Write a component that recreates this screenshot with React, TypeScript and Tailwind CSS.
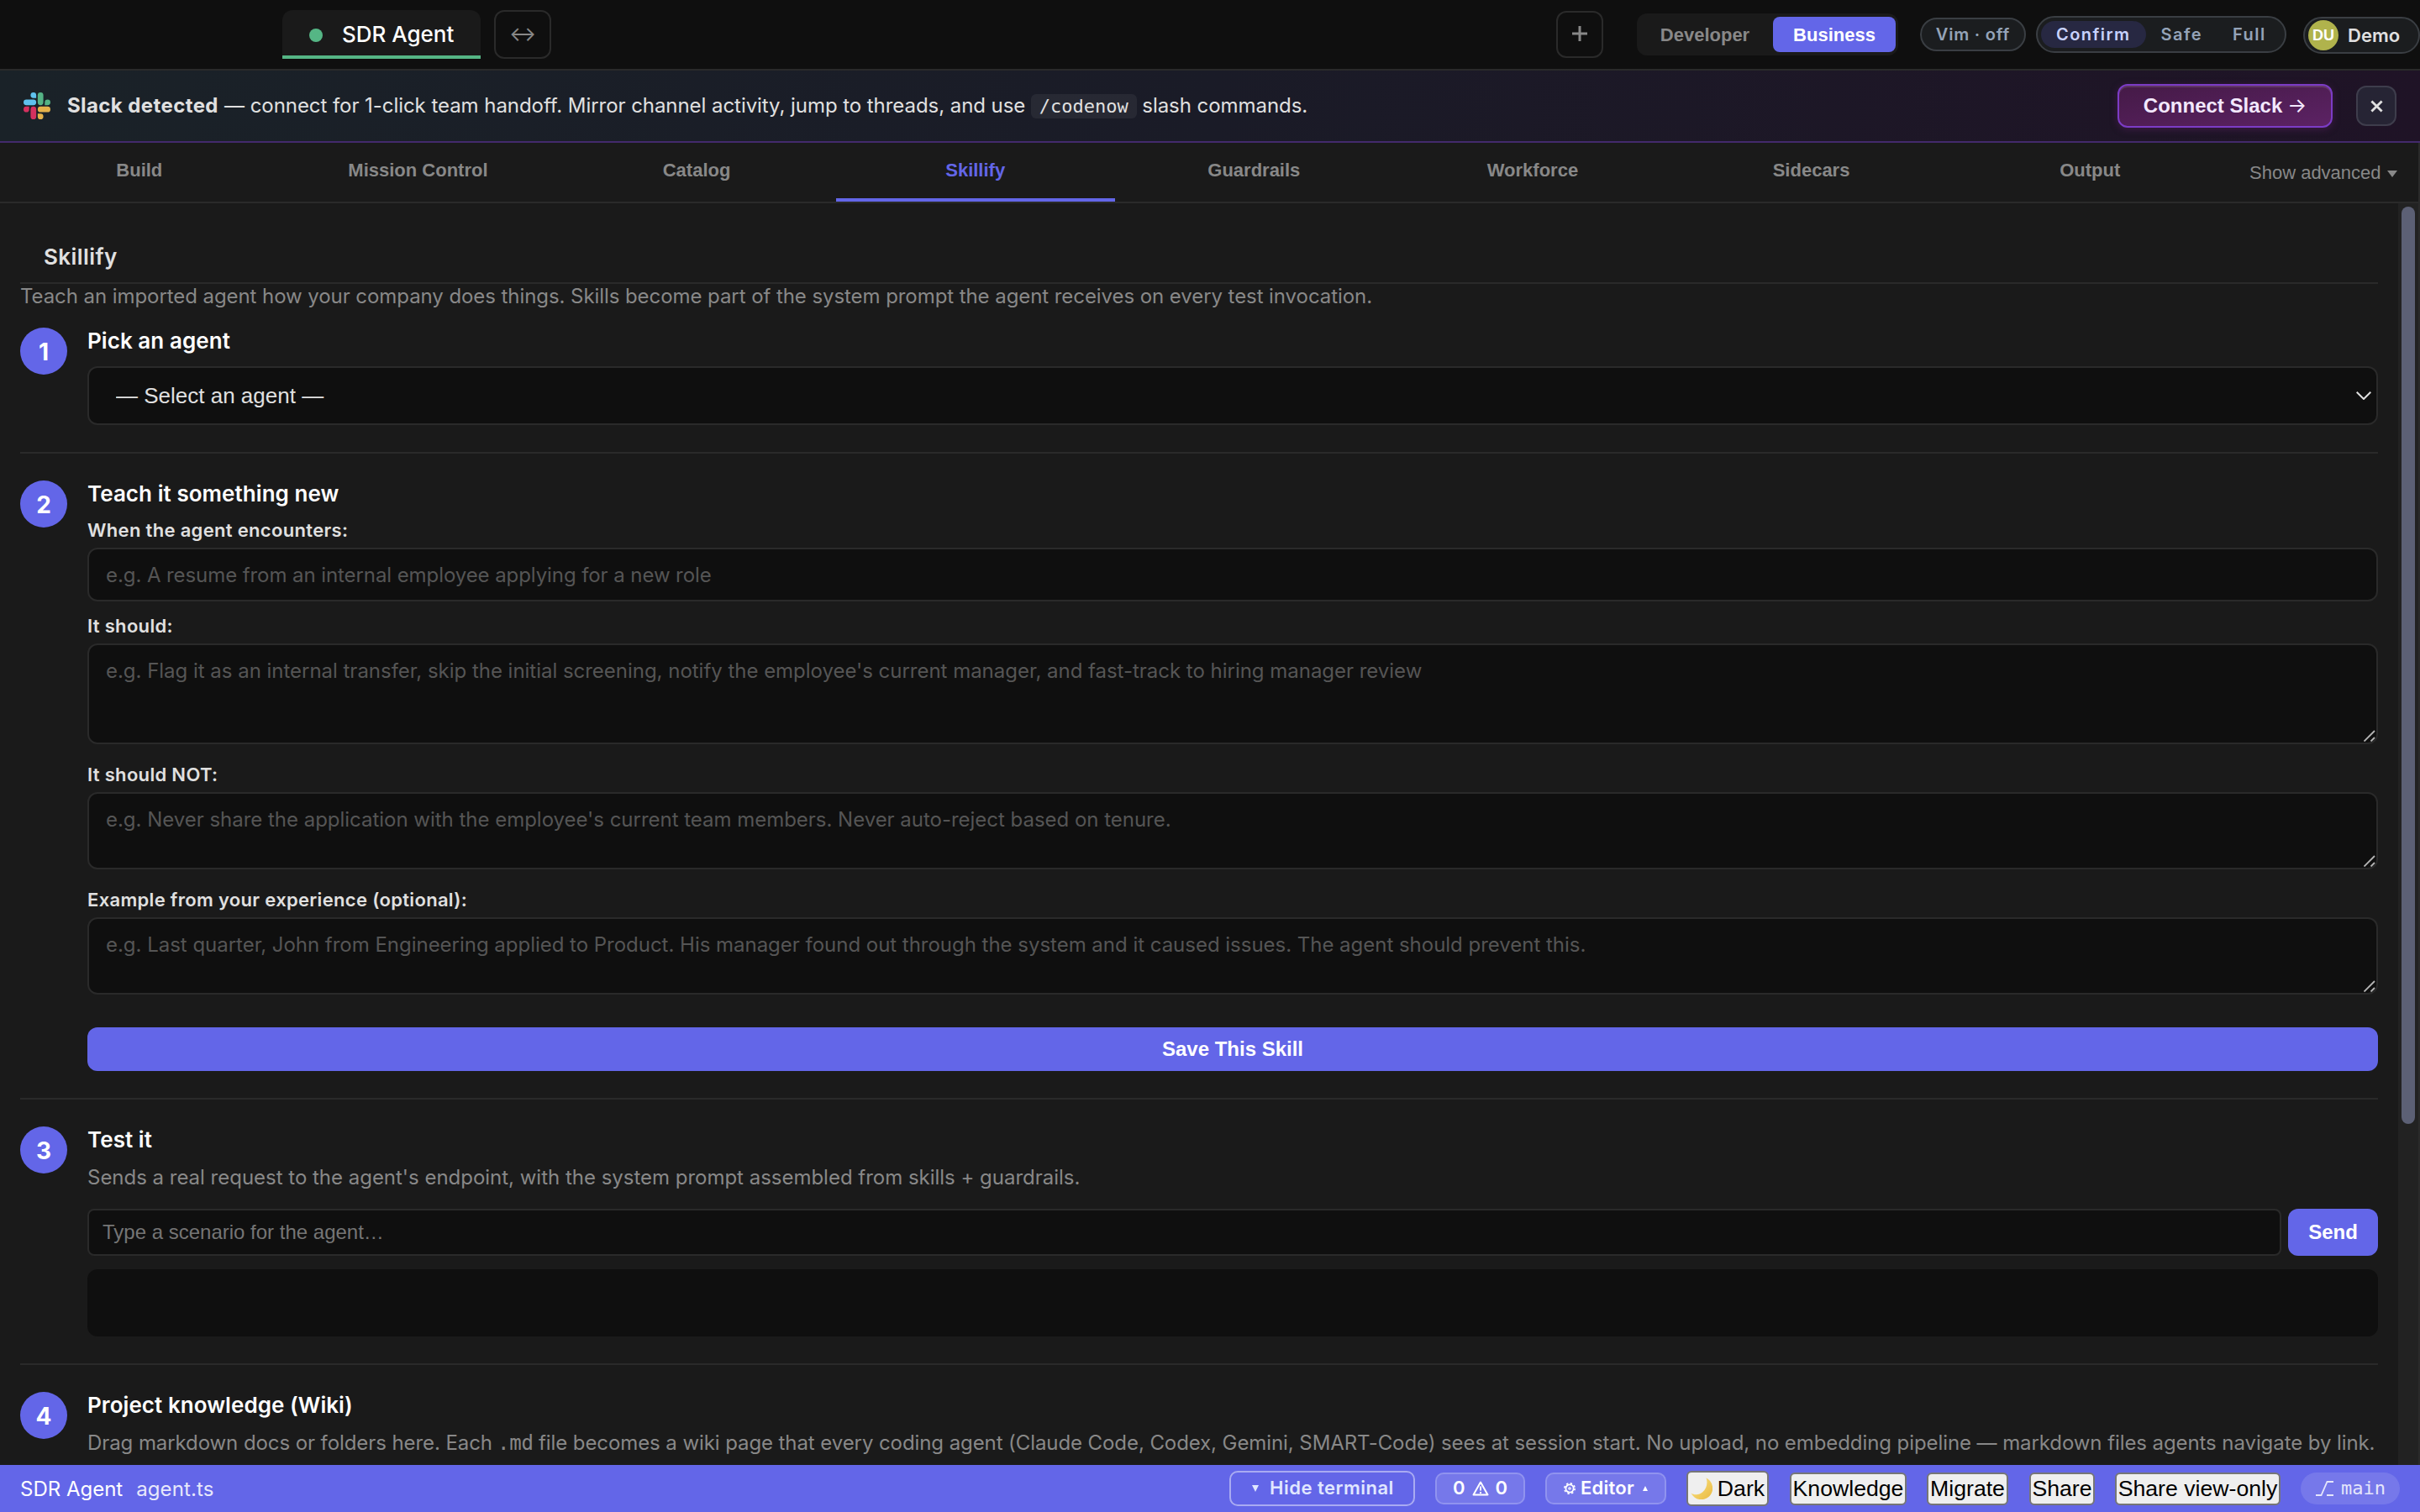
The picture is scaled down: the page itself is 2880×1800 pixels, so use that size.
import type { ReactNode } from 'react'
import clsx from 'clsx'

const tabs = ['Build', 'Mission Control', 'Catalog', 'Skillify', 'Guardrails', 'Workforce', 'Sidecars', 'Output']

const modes = ['Confirm', 'Safe', 'Full']

function SlackLogo() {
  return (
    <svg viewBox="0 0 24 24" className="size-8 shrink-0">
      <path fill="#d4315f" d="M5.042 15.165a2.528 2.528 0 0 1-2.52 2.523A2.528 2.528 0 0 1 0 15.165a2.527 2.527 0 0 1 2.522-2.52h2.52v2.52zM6.313 15.165a2.527 2.527 0 0 1 2.521-2.52 2.527 2.527 0 0 1 2.521 2.52v6.313A2.528 2.528 0 0 1 8.834 24a2.528 2.528 0 0 1-2.521-2.522v-6.313z" />
      <path fill="#5fc2ee" d="M8.834 5.042a2.528 2.528 0 0 1-2.521-2.52A2.528 2.528 0 0 1 8.834 0a2.528 2.528 0 0 1 2.521 2.522v2.52H8.834zM8.834 6.313a2.528 2.528 0 0 1 2.521 2.521 2.528 2.528 0 0 1-2.521 2.521H2.522A2.528 2.528 0 0 1 0 8.834a2.528 2.528 0 0 1 2.522-2.521h6.312z" />
      <path fill="#55b385" d="M18.956 8.834a2.528 2.528 0 0 1 2.522-2.521A2.528 2.528 0 0 1 24 8.834a2.528 2.528 0 0 1-2.522 2.521h-2.522V8.834zM17.688 8.834a2.528 2.528 0 0 1-2.523 2.521 2.527 2.527 0 0 1-2.52-2.521V2.522A2.527 2.527 0 0 1 15.165 0a2.528 2.528 0 0 1 2.523 2.522v6.312z" />
      <path fill="#e5b24a" d="M15.165 18.956a2.528 2.528 0 0 1 2.523 2.522A2.528 2.528 0 0 1 15.165 24a2.527 2.527 0 0 1-2.52-2.522v-2.522h2.52zM15.165 17.688a2.527 2.527 0 0 1-2.52-2.523 2.526 2.526 0 0 1 2.52-2.52h6.313A2.527 2.527 0 0 1 24 15.165a2.528 2.528 0 0 1-2.522 2.523h-6.313z" />
    </svg>
  )
}

function TopBar() {
  return (
    <header className="flex h-[84px] shrink-0 items-start border-b-2 border-[#2a2a2a] bg-[#0f0f0f] pl-[336px]">
      <button className="mt-3 flex h-[58px] w-[236px] items-center rounded-t-xl border-b-4 border-[#55b685] bg-[#1a1a1a] pl-8 text-[26px] font-medium text-white">
        <span className="mt-1.5 size-4 rounded-full bg-[#55b685]" />
        <span className="ml-[23px] mt-0.5 tracking-[-0.02px]">SDR Agent</span>
      </button>
      <button className="mt-3 ml-4 flex h-[58px] w-[68px] items-center justify-center rounded-xl border-2 border-[#2a2a2a] text-2xl text-[#888]">
        ↔
      </button>

      <button className="mt-[13px] ml-auto flex size-14 items-center justify-center rounded-xl border-2 border-[#2a2a2a] text-[#888]">
        <svg viewBox="0 0 18 18" className="mb-0.5 size-[18px]" stroke="currentColor" strokeWidth="3">
          <path d="M9 0v18M0 9h18" />
        </svg>
      </button>

      <div className="mt-4 ml-10 flex h-[50px] w-[311px] items-center gap-1 rounded-xl bg-[#1a1a1a] py-1 pr-[3px] pl-1 font-[Liberation_Sans,sans-serif] text-[22px] font-bold">
        <button className="h-[42px] w-[154px] text-[#888]">Developer</button>
        <button className="h-[42px] w-[146px] rounded-lg bg-[#6366e8] text-white">Business</button>
      </div>

      <button className="mt-[21px] ml-[26px] h-10 w-[126px] rounded-full border-2 border-[#3a3e43] bg-[#1b1d1f] text-xl leading-none font-semibold tracking-[0.8px] text-[#94a3b8]">
        Vim · off
      </button>

      <div className="mt-[19px] ml-3 flex h-11 w-[298px] items-center rounded-full border-2 border-[#3a3e43] bg-[#1b1d1f] px-1 text-xl font-semibold tracking-[1.45px] text-[#94a3b8]">
        {modes.map((mode, i) => (
          <button key={mode} className={clsx('h-8 rounded-full px-[18px] leading-8', i === 0 && 'bg-[#272842] text-[#c7d2fe]')}>
            {mode}
          </button>
        ))}
      </div>

      <button className="mt-5 ml-5 flex h-11 w-[139px] items-center rounded-full border-2 border-[#3a3e43] bg-[#1b1d1f] pl-1 text-[22px] font-semibold text-[#e0e0e0]">
        <span className="flex size-9 items-center justify-center rounded-full bg-[#b0b34c] font-[Liberation_Sans,sans-serif] text-lg font-bold text-white">DU</span>
        <span className="ml-[11px]">Demo</span>
      </button>
    </header>
  )
}

function SlackBanner() {
  return (
    <div className="flex h-[86px] shrink-0 items-center border-b-2 border-[#432a6c] bg-linear-to-r from-[#1a2228] via-[#1a1b27] to-[#1f1326] pr-7 pl-7 text-2xl whitespace-nowrap text-[#e0e0e0]">
      <SlackLogo />
      <strong className="ml-5 w-[187px] font-bold tracking-[0.4px]">Slack detected</strong>
      <span className="tracking-[-0.055px]">— connect for 1-click team handoff. Mirror channel activity, jump to threads, and use</span>
      <code className="mx-[6.5px] rounded-md bg-white/6 px-2.5 font-['DejaVu_Sans_Mono',monospace] text-[22px] leading-[29px]">/codenow</code>
      <span className="tracking-[-0.05px]">slash commands.</span>
      <button className="ml-auto flex h-[52px] w-64 items-center justify-center gap-1.5 rounded-xl border-2 border-[#7c3cc6] bg-linear-to-br from-[#451a47] to-[#5c2264] font-[Liberation_Sans,sans-serif] font-bold text-[#f3e8ff] shadow-[0_2px_8px_rgba(92,34,100,0.5),inset_0_2px_0_rgba(255,255,255,0.12)]">
        <span>Connect Slack</span>
        <span className="font-[Inter,sans-serif] font-normal">→</span>
      </button>
      <button className="ml-7 flex h-12 w-12 items-center justify-center rounded-xl border-2 border-[#3e3d4c] bg-[#262434]">
        <svg viewBox="0 0 16 16" className="size-[15px]" stroke="currentColor" strokeWidth="3">
          <path d="M1.5 1.5l13 13M14.5 1.5l-13 13" />
        </svg>
      </button>
    </div>
  )
}

function TabNav() {
  return (
    <nav className="flex h-[72px] shrink-0 border-b-2 border-[#2a2a2a] font-[Liberation_Sans,sans-serif] text-[22px]">
      {tabs.map((tab) => (
        <button
          key={tab}
          className={clsx('flex-1 border-b-4 pb-px font-bold', tab === 'Skillify' ? 'border-[#6366e8] text-[#6366e8]' : 'border-transparent text-[#888]')}
        >
          {tab}
        </button>
      ))}
      <button className="flex w-[225px] items-center gap-[7px] px-6 text-[#888]">
        <span className="pt-px whitespace-nowrap">Show advanced</span>
        <svg viewBox="0 0 12 8" className="mt-1 h-2 w-3" fill="currentColor">
          <path d="M0 0h12L6 8z" />
        </svg>
      </button>
    </nav>
  )
}

function Step({ n, title, last, children }: { n: number; title: string; last?: boolean; children: ReactNode }) {
  return (
    <section className={clsx('flex gap-6 pb-8', !last && 'mb-8 border-b-2 border-[#2a2a2a]')}>
      <div className="flex size-14 shrink-0 items-center justify-center rounded-full bg-[#6366e8] pt-0.5 text-[28px] font-bold text-white">{n}</div>
      <div className="flex min-w-0 flex-1 flex-col">
        <h3 className="h-8 text-[26px] leading-8 font-semibold tracking-[0.06px] text-white">{title}</h3>
        {children}
      </div>
    </section>
  )
}

function Label({ children, first }: { children: ReactNode; first?: boolean }) {
  return (
    <label className={clsx('mb-2 text-[22px] leading-[26px] font-semibold tracking-[0.32px] text-[#e0e0e0]', first && 'mt-3.5')}>
      {children}
    </label>
  )
}

function TextArea({ placeholder, className }: { placeholder: string; className: string }) {
  return (
    <div className={clsx('relative', className)}>
      <textarea
        placeholder={placeholder}
        className="block h-full w-full resize-none rounded-xl border-2 border-[#2a2a2a] bg-[#0f0f0f] px-5 pt-[17px] text-2xl leading-7 tracking-[-0.022px] placeholder:text-[#555]"
      />
      <svg viewBox="0 0 14 14" className="absolute right-[3px] bottom-[3px] size-3.5" stroke="#b5b5b5" strokeWidth="1.8">
        <path d="M0.5 13.5l12.5-12.5M8.5 13.5l4.5-4.5" />
      </svg>
    </div>
  )
}

function Skillify() {
  return (
    <main className="flex w-[2854px] flex-col overflow-hidden pr-6 pl-6">
      <h2 className="mt-12 shrink-0 border-b-2 border-[#2a2a2a] pb-3.5 pl-7 text-[26px] leading-8 font-semibold tracking-[0.42px] text-[#e0e0e0]">Skillify</h2>
      <p className="mb-[23px] shrink-0 pt-px text-2xl leading-7 tracking-[-0.07px] text-[#888]">
        Teach an imported agent how your company does things. Skills become part of the system prompt the agent receives on every test invocation.
      </p>

      <Step n={1} title="Pick an agent">
        <div className="relative mt-3.5 h-[70px]">
          <select className="h-full w-full appearance-none rounded-xl border-2 border-[#2a2a2a] bg-[#0f0f0f] px-8 font-[Liberation_Sans,sans-serif] text-[26px] text-[#e0e0e0]">
            <option>— Select an agent —</option>
          </select>
          <svg viewBox="0 0 18 10" className="absolute top-[30px] right-2 h-2.5 w-[18px]" fill="none" stroke="#e0e0e0" strokeWidth="2">
            <path d="M0.7 0.7L9 9l8.3-8.3" />
          </svg>
        </div>
      </Step>

      <Step n={2} title="Teach it something new">
        <Label first>When the agent encounters:</Label>
        <input
          placeholder="e.g. A resume from an internal employee applying for a new role"
          className="mb-4 h-16 rounded-xl border-2 border-[#2a2a2a] bg-[#0f0f0f] px-5 text-2xl tracking-[-0.08px] placeholder:text-[#555]"
        />
        <Label>It should:</Label>
        <TextArea
          className="mb-[23px] h-[120px]"
          placeholder="e.g. Flag it as an internal transfer, skip the initial screening, notify the employee's current manager, and fast-track to hiring manager review"
        />
        <Label>It should NOT:</Label>
        <TextArea
          className="mb-[23px] h-[92px]"
          placeholder="e.g. Never share the application with the employee's current team members. Never auto-reject based on tenure."
        />
        <Label>Example from your experience (optional):</Label>
        <TextArea
          className="mb-[39px] h-[92px]"
          placeholder="e.g. Last quarter, John from Engineering applied to Product. His manager found out through the system and it caused issues. The agent should prevent this."
        />
        <button className="h-[52px] rounded-xl bg-[#6366e8] font-[Liberation_Sans,sans-serif] text-2xl font-bold text-white">Save This Skill</button>
      </Step>

      <Step n={3} title="Test it">
        <p className="mt-3.5 text-2xl leading-[30px] tracking-[-0.015px] text-[#888]">
          Sends a real request to the agent's endpoint, with the system prompt assembled from skills + guardrails.
        </p>
        <div className="mt-[22px] flex h-14 gap-2 font-[Liberation_Sans,sans-serif] text-2xl">
          <input
            placeholder="Type a scenario for the agent…"
            className="flex-1 rounded-lg border-2 border-[#2a2a2a] bg-[#0f0f0f] px-4 placeholder:text-[#757575]"
          />
          <button className="w-[107px] rounded-xl bg-[#6366e8] font-bold text-white">Send</button>
        </div>
        <div className="mt-4 h-20 rounded-xl bg-[#0f0f0f]" />
      </Step>

      <Step n={4} title="Project knowledge (Wiki)" last>
        <p className="mt-3.5 flex text-2xl leading-[30px] tracking-[-0.085px] whitespace-nowrap text-[#888]">
          <span>Drag markdown docs or folders here. Each</span>
          <code className="mx-1.5 font-['DejaVu_Sans_Mono',monospace]">.md</code>
          <span>
            file becomes a wiki page that every coding agent (Claude Code, Codex, Gemini, SMART-Code) sees at session start. No upload, no embedding pipeline — markdown files agents navigate by link.
          </span>
        </p>
      </Step>
    </main>
  )
}

function PlainButton({ children, className }: { children: ReactNode; className: string }) {
  return (
    <button className={clsx('flex items-center justify-center rounded-md border-2 border-[#767676] bg-[#efefef] font-[Liberation_Sans,sans-serif] text-[26.67px] leading-none whitespace-nowrap text-black', className)}>
      {children}
    </button>
  )
}

function StatusBar() {
  return (
    <footer className="flex h-14 shrink-0 items-center gap-6 bg-[#6366e8] pr-6 pl-6 text-2xl text-white">
      <div className="mr-auto flex gap-4 pt-0.5">
        <span>SDR Agent</span>
        <span className="tracking-[0.1px] opacity-85">agent.ts</span>
      </div>

      <button className="flex h-[42px] w-[221px] items-center rounded-[10px] border-2 border-white/45 pl-[25px] text-[22px] font-semibold tracking-[0.5px] text-[#e0e7ff]">
        <svg viewBox="0 0 8 8" className="mr-[13px] size-2" fill="currentColor">
          <path d="M0 0h8L4 8z" />
        </svg>
        Hide terminal
      </button>
      <button className="flex h-[38px] w-[107px] items-center justify-center gap-2 rounded-[10px] border-2 border-white/20 bg-white/12 text-[22px] font-semibold">
        0
        <svg viewBox="0 0 20 18" className="h-[18px] w-5" fill="none" stroke="currentColor" strokeWidth="2" strokeLinejoin="round">
          <path d="M10 1.5L18.5 16.5H1.5zM10 6.5v5M10 13v2" />
        </svg>
        0
      </button>
      <button className="flex h-[38px] w-36 items-center rounded-[10px] border-2 border-white/20 bg-white/12 pl-5 text-[22px] font-semibold">
        <svg viewBox="0 0 14 14" className="mr-1.5 size-3.5" fill="none" stroke="currentColor">
          <circle cx="7" cy="7" r="4.6" strokeWidth="1.8" />
          <circle cx="7" cy="7" r="1.2" strokeWidth="1.2" />
          <circle cx="7" cy="7" r="6.2" strokeWidth="1.6" strokeDasharray="2.4 2.47" />
        </svg>
        <span className="tracking-[0.25px]">Editor</span>
        <svg viewBox="0 0 6 6" className="ml-2.5 size-1.5" fill="currentColor">
          <path d="M0 6h6L3 0z" />
        </svg>
      </button>
      <PlainButton className="h-[42px] w-[98px] gap-1.5 mr-px">
        <svg viewBox="0 0 26 26" className="size-[26px]">
          <defs>
            <linearGradient id="moon" x1="0" y1="0" x2="1" y2="1">
              <stop offset="0" stopColor="#fbe58a" />
              <stop offset="1" stopColor="#e9b93f" />
            </linearGradient>
          </defs>
          <path fill="url(#moon)" d="M18.5 0.5A13.5 13.5 0 1 1 0.5 18.5 C3 20.5 9 21.5 14 17.5 C19.5 13 20.5 5.5 18.5 0.5z" />
        </svg>
        Dark
      </PlainButton>
      <PlainButton className="h-[39px] w-[139px]">Knowledge</PlainButton>
      <PlainButton className="mr-px h-[39px] w-[97px]">Migrate</PlainButton>
      <PlainButton className="h-[39px] w-[78px]">Share</PlainButton>
      <PlainButton className="h-[39px] w-[197px]">Share view-only</PlainButton>
      <div className="flex h-[38px] w-[118px] items-center rounded-full bg-white/12 pl-[18px] font-['DejaVu_Sans_Mono',monospace] text-[22px] text-[#e5e6fb]">
        <svg viewBox="0 0 21 18" className="mr-[9px] h-[18px] w-[21px]" fill="none" stroke="currentColor" strokeWidth="1.8">
          <path d="M0 17h6.5L13.5 1H21M13 17h8" />
        </svg>
        main
      </div>
    </footer>
  )
}

export default function App() {
  return (
    <div className="flex h-[1800px] w-[2880px] flex-col overflow-hidden bg-[#1a1a1a] font-[Inter,sans-serif]">
      <TopBar />
      <SlackBanner />
      <div className="flex min-h-0 flex-1 flex-col border-r-2 border-[#2a2a2a]">
        <TabNav />
        <div className="flex min-h-0 flex-1">
          <Skillify />
          <div className="w-6 bg-[#222] px-1 pt-1">
            <div className="h-[1092px] w-4 rounded-full bg-[#5c6075]" />
          </div>
        </div>
      </div>
      <StatusBar />
    </div>
  )
}
